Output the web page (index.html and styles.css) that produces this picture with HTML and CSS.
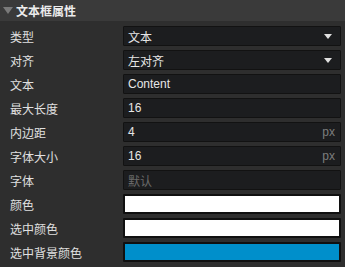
FILE: index.html
```html
<!DOCTYPE html>
<html lang="en">
  <head>
    <meta charset="UTF-8" />
    <title>文本框属性</title>
    <link rel="stylesheet" href="styles.css">
  </head>
  <body>
    <section class="panel">
      <header class="panel-head">
        <span class="caret"></span>
        <span>文本框属性</span>
      </header>
      <div class="props">
        <label class="name">类型</label>
        <div class="field select">文本<span class="arrow"></span></div>

        <label class="name">对齐</label>
        <div class="field select">左对齐<span class="arrow"></span></div>

        <label class="name">文本</label>
        <div class="field">Content</div>

        <label class="name">最大长度</label>
        <div class="field">16</div>

        <label class="name">内边距</label>
        <div class="field">4<span class="unit">px</span></div>

        <label class="name">字体大小</label>
        <div class="field">16<span class="unit">px</span></div>

        <label class="name">字体</label>
        <div class="field placeholder">默认</div>

        <label class="name">颜色</label>
        <div class="swatch white"></div>

        <label class="name">选中颜色</label>
        <div class="swatch white"></div>

        <label class="name">选中背景颜色</label>
        <div class="swatch blue"></div>
      </div>
    </section>
  </body>
</html>
```

FILE: styles.css
```css
body {
  margin: 0;
  background-color: #2e2e2e;
  font-family: "Liberation Sans", "Noto Sans CJK SC", sans-serif;
  font-size: 12px;
  color: #e2e2e2;
}

.panel {
  width: 345px;
  height: 267px;
  overflow: hidden;
}

.panel-head {
  display: flex;
  align-items: center;
  gap: 3px;
  height: 21px;
  padding-left: 3px;
  background-color: #3a3a3a;
  font-weight: bold;
  font-size: 12px;
  color: #ececec;
}

.caret {
  width: 0;
  height: 0;
  border-left: 5px solid transparent;
  border-right: 5px solid transparent;
  border-top: 7px solid #7a7a7a;
}

.props {
  display: grid;
  grid-template-columns: 113px 1fr;
  grid-auto-rows: 20px;
  row-gap: 4px;
  padding: 5px 4px 0 10px;
}

.name {
  display: flex;
  align-items: center;
  color: #e0e0e0;
}

.field {
  display: flex;
  align-items: center;
  padding: 0 5px 0 4px;
  background-color: #1c1d1f;
  border: 1px solid #121212;
  border-radius: 1px;
  color: #e6e6e6;
}

.select {
  justify-content: space-between;
}

.arrow {
  width: 0;
  height: 0;
  margin-right: 3px;
  border-left: 4px solid transparent;
  border-right: 4px solid transparent;
  border-top: 5px solid #e0e0e0;
}

.unit {
  margin-left: auto;
  color: #7d7d7d;
}

.placeholder {
  color: #6a6a6a;
}

.swatch {
  border: 2px solid #101010;
  border-radius: 1px;
}

.white {
  background-color: #fff;
}

.blue {
  background-color: #008fcb;
}
```
